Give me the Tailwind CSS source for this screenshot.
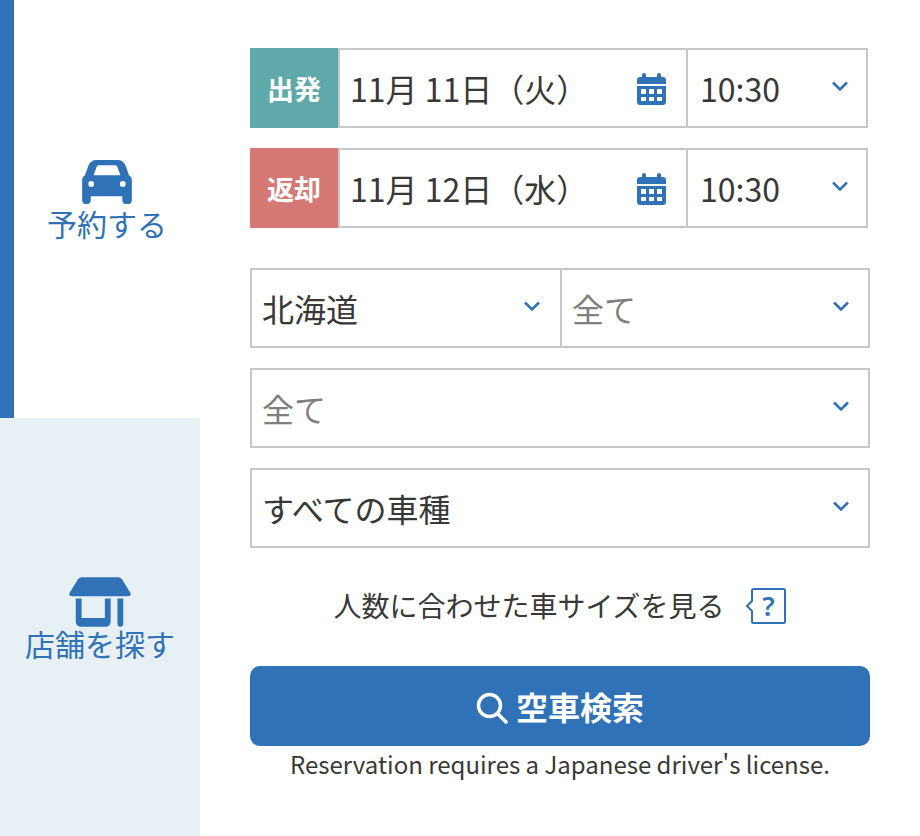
<!DOCTYPE html>
<html lang="ja">
<head>
  <meta charset="UTF-8">
  <title>予約する</title>
  <script src="https://cdn.jsdelivr.net/npm/@tailwindcss/browser@4"></script>
</head>
<body class="bg-white font-['Noto_Sans_CJK_JP','Noto_Sans',sans-serif] text-[#383838]">
  <div class="flex w-[920px] h-[836px] overflow-hidden">

    <!-- Tabs -->
    <aside class="w-[200px] flex flex-col shrink-0">
      <a class="h-[418px] border-l-[14px] border-[#3072b8] flex flex-col items-center pt-[160px] text-[#3072b8]">
        <svg class="w-[50px] h-[44px]" viewBox="0 0 52 46" fill="#3072b8">
          <path fill-rule="evenodd" d="M15 0h22c4 0 7 2 8.500 6l3.500 10c2 1 3 3 3 5v21c0 2-1.500 4-3.500 4h-3c-2 0-3.500-2-3.500-4v-4H9v4c0 2-1.500 4-3.500 4h-2C1.500 46 0 44 0 42V21c0-2 1-4 3-5L6.500 6C8 2 11 0 15 0zM12 16h28l-3-8.500c-.500-1.500-1.500-2-3-2H18c-1.500 0-2.500.500-3 2zM9.500 22a3 3 0 1 0 0 6 3 3 0 0 0 0-6zm33 0a3 3 0 1 0 0 6 3 3 0 0 0 0-6z"/>
        </svg>
        <span class="text-[30px] leading-[40px] -mt-[1px]">予約する</span>
      </a>
      <a class="h-[418px] bg-[#e6f0f5] flex flex-col items-center pt-[159px] text-[#3072b8]">
        <svg class="w-[62px] h-[50px]" viewBox="0 0 64 51" fill="#3072b8">
          <path d="M13 0h38c1.500 0 3 1 4 2.500l8 13c1.500 2 .500 4-2 4H3c-2.500 0-3.500-2-2-4l8-13C10 1 11.500 0 13 0z"/>
          <path d="M7 22h6v20h24V22h6v24c0 3-2 5-5 5H12c-3 0-5-2-5-5z"/>
          <path d="M50 22h6v26c0 2-1 3-3 3s-3-1-3-3z"/>
        </svg>
        <span class="text-[30px] leading-[40px] -mt-[4px]">店舗を探す</span>
      </a>
    </aside>

    <!-- Search form -->
    <main class="w-[620px] ml-[50px] pt-[48px] flex flex-col text-[32px]">
      <div class="flex h-[80px] w-[618px]">
        <div class="w-[88px] bg-[#60a9aa] text-white font-bold text-[27px] flex items-center justify-center shrink-0 pt-[2px]">出発</div>
        <div class="w-[348px] border-2 border-r-0 border-[#c8c8c8] flex items-center justify-between pl-[10px] pr-[20px]">
          <span>11月 11日（火）</span>
          <svg class="w-[29px] h-[32px] mt-[2px]" viewBox="0 0 29 32" fill="#3072b8">
            <path fill-rule="evenodd" d="M7 0a2 2 0 0 1 2 2v2h11V2a2 2 0 0 1 4 0v2h2c1.700 0 3 1.300 3 3v4H0V7c0-1.700 1.300-3 3-3h2V2a2 2 0 0 1 2-2zM0 13h29v16c0 1.700-1.300 3-3 3H3c-1.700 0-3-1.300-3-3zm4 3v5h5v-5zm8 0v5h5v-5zm8 0v5h5v-5zM4 24v4h5v-4zm8 0v4h5v-4zm8 0v4h5v-4z"/>
          </svg>
        </div>
        <div class="w-[182px] border-2 border-[#c8c8c8] flex items-center justify-between pl-[12px] pr-[18px]">
          <span>10:30</span>
          <svg class="w-[16px] h-[10px] -mt-[4px]" viewBox="0 0 16 10" fill="none" stroke="#3072b8" stroke-width="2.500"><path d="M1 1.500l7 7 7-7"/></svg>
        </div>
      </div>

      <div class="flex h-[80px] w-[618px] mt-[20px]">
        <div class="w-[88px] bg-[#d67874] text-white font-bold text-[27px] flex items-center justify-center shrink-0 pt-[2px]">返却</div>
        <div class="w-[348px] border-2 border-r-0 border-[#c8c8c8] flex items-center justify-between pl-[10px] pr-[20px]">
          <span>11月 12日（水）</span>
          <svg class="w-[29px] h-[32px] mt-[2px]" viewBox="0 0 29 32" fill="#3072b8">
            <path fill-rule="evenodd" d="M7 0a2 2 0 0 1 2 2v2h11V2a2 2 0 0 1 4 0v2h2c1.700 0 3 1.300 3 3v4H0V7c0-1.700 1.300-3 3-3h2V2a2 2 0 0 1 2-2zM0 13h29v16c0 1.700-1.300 3-3 3H3c-1.700 0-3-1.300-3-3zm4 3v5h5v-5zm8 0v5h5v-5zm8 0v5h5v-5zM4 24v4h5v-4zm8 0v4h5v-4zm8 0v4h5v-4z"/>
          </svg>
        </div>
        <div class="w-[182px] border-2 border-[#c8c8c8] flex items-center justify-between pl-[12px] pr-[18px]">
          <span>10:30</span>
          <svg class="w-[16px] h-[10px] -mt-[4px]" viewBox="0 0 16 10" fill="none" stroke="#3072b8" stroke-width="2.500"><path d="M1 1.500l7 7 7-7"/></svg>
        </div>
      </div>

      <div class="flex h-[80px] mt-[40px] border-2 border-[#c8c8c8]">
        <div class="w-[310px] border-r-2 border-[#c8c8c8] flex items-center justify-between pl-[10px] pr-[20px]">
          <span>北海道</span>
          <svg class="w-[16px] h-[10px] -mt-[4px]" viewBox="0 0 16 10" fill="none" stroke="#3072b8" stroke-width="2.500"><path d="M1 1.500l7 7 7-7"/></svg>
        </div>
        <div class="flex-1 flex items-center justify-between pl-[10px] pr-[19px] text-[#808080]">
          <span>全て</span>
          <svg class="w-[16px] h-[10px] -mt-[4px]" viewBox="0 0 16 10" fill="none" stroke="#3072b8" stroke-width="2.500"><path d="M1 1.500l7 7 7-7"/></svg>
        </div>
      </div>

      <div class="h-[80px] mt-[20px] border-2 border-[#c8c8c8] flex items-center justify-between pl-[10px] pr-[19px] text-[#808080]">
        <span>全て</span>
        <svg class="w-[16px] h-[10px] -mt-[4px]" viewBox="0 0 16 10" fill="none" stroke="#3072b8" stroke-width="2.500"><path d="M1 1.500l7 7 7-7"/></svg>
      </div>

      <div class="h-[80px] mt-[20px] border-2 border-[#c8c8c8] flex items-center justify-between pl-[10px] pr-[19px]">
        <span>すべての車種</span>
        <svg class="w-[16px] h-[10px] -mt-[4px]" viewBox="0 0 16 10" fill="none" stroke="#3072b8" stroke-width="2.500"><path d="M1 1.500l7 7 7-7"/></svg>
      </div>

      <div class="h-[40px] mt-[38px] flex items-center justify-center text-[28px]">
        <span class="-mt-[2px]">人数に合わせた車サイズを見る</span>
        <!-- help badge -->
        <div class="relative w-[42px] h-[36px] ml-[19px] mr-[1px]">
          <svg class="w-[42px] h-[36px]" viewBox="0 0 42 36" fill="none">
            <path d="M8 2.500c0-1 .500-1.500 1.500-1.500h30c1 0 1.500.500 1.500 1.500v31c0 1-.500 1.500-1.500 1.500h-30c-1 0-1.500-.500-1.500-1.500V23l-5-5 5-5z" stroke="#3072b8" stroke-width="2"/>
          </svg>
          <span class="absolute left-[8px] right-0 top-0 h-[36px] flex items-center justify-center text-[27px] leading-[36px] font-semibold font-['Noto_Sans',sans-serif] text-[#3072b8]">?</span>
        </div>
      </div>

      <button class="h-[80px] mt-[40px] w-full rounded-[10px] bg-[#3072b8] text-white font-bold text-[32px] flex items-center justify-center">
        <svg class="w-[32px] h-[32px] mr-[8px] mt-[4px]" viewBox="0 0 32 32" fill="none" stroke="#ffffff" stroke-width="3.500"><circle cx="13.500" cy="13.500" r="11"/><path d="M21.500 21.500L30 30" stroke-linecap="round"/></svg>
        <span>空車検索</span>
      </button>

      <p class="text-[24px] leading-[36px] text-center">Reservation requires a Japanese driver's license.</p>
    </main>
  </div>
</body>
</html>
